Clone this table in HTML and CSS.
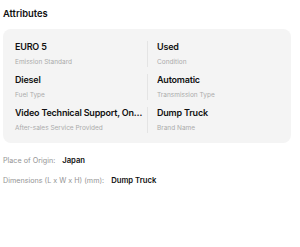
FILE: index.html
```html
<!DOCTYPE html>
<html>
<head>
<meta charset="utf-8">
<link rel="stylesheet" href="styles.css">
</head>
<body>
<div class="page">
  <h2 class="title">Attributes</h2>
  <div class="card">
    <div class="cell left">
      <div class="value">EURO 5</div>
      <div class="label">Emission Standard</div>
    </div>
    <div class="cell right">
      <div class="value">Used</div>
      <div class="label">Condition</div>
    </div>
    <div class="cell left">
      <div class="value">Diesel</div>
      <div class="label">Fuel Type</div>
    </div>
    <div class="cell right">
      <div class="value">Automatic</div>
      <div class="label">Transmission Type</div>
    </div>
    <div class="cell left">
      <div class="value">Video Technical Support, Online Support</div>
      <div class="label">After-sales Service Provided</div>
    </div>
    <div class="cell right">
      <div class="value">Dump Truck</div>
      <div class="label">Brand Name</div>
    </div>
  </div>
  <div class="details">
    <div class="row"><span class="k">Place of Origin:</span><span class="v">Japan</span></div>
    <div class="row"><span class="k">Dimensions (L x W x H) (mm):</span><span class="v">Dump Truck</span></div>
  </div>
</div>
</body>
</html>
```
FILE: styles.css
```css
* { box-sizing: border-box; }
html, body { margin: 0; padding: 0; background: #fff; }
body { font-family: Inter, "Noto Sans", sans-serif; color: #111; }
.page { padding: 7px 9px 0 3px; }
.title { margin: 0; font-size: 9.4px; line-height: 14px; font-weight: 600; color: #111; }
.card {
  margin-top: 8px;
  background: #f4f4f4;
  border-radius: 8px;
  padding: 12px 12px 10px 12px;
  display: grid;
  grid-template-columns: 1fr 1fr;
  row-gap: 7px;
}
.cell { min-width: 0; }
.cell.left { padding-right: 4px; }
.cell.right { border-left: 1px solid #e4e4e4; padding-left: 9px; }
.value {
  font-size: 9px; line-height: 12px; font-weight: 600; color: #111;
  letter-spacing: -0.2px;
  white-space: nowrap; overflow: hidden; text-overflow: ellipsis;
}
.label { margin-top: 4px; font-size: 6.5px; line-height: 10px; color: #ababab; white-space: nowrap; }
.details { margin-top: 7px; }
.row { display: flex; align-items: center; gap: 7px; height: 20px; }
.k { font-size: 7.2px; color: #949494; }
.v { font-size: 7.7px; font-weight: 600; color: #111; }
```
